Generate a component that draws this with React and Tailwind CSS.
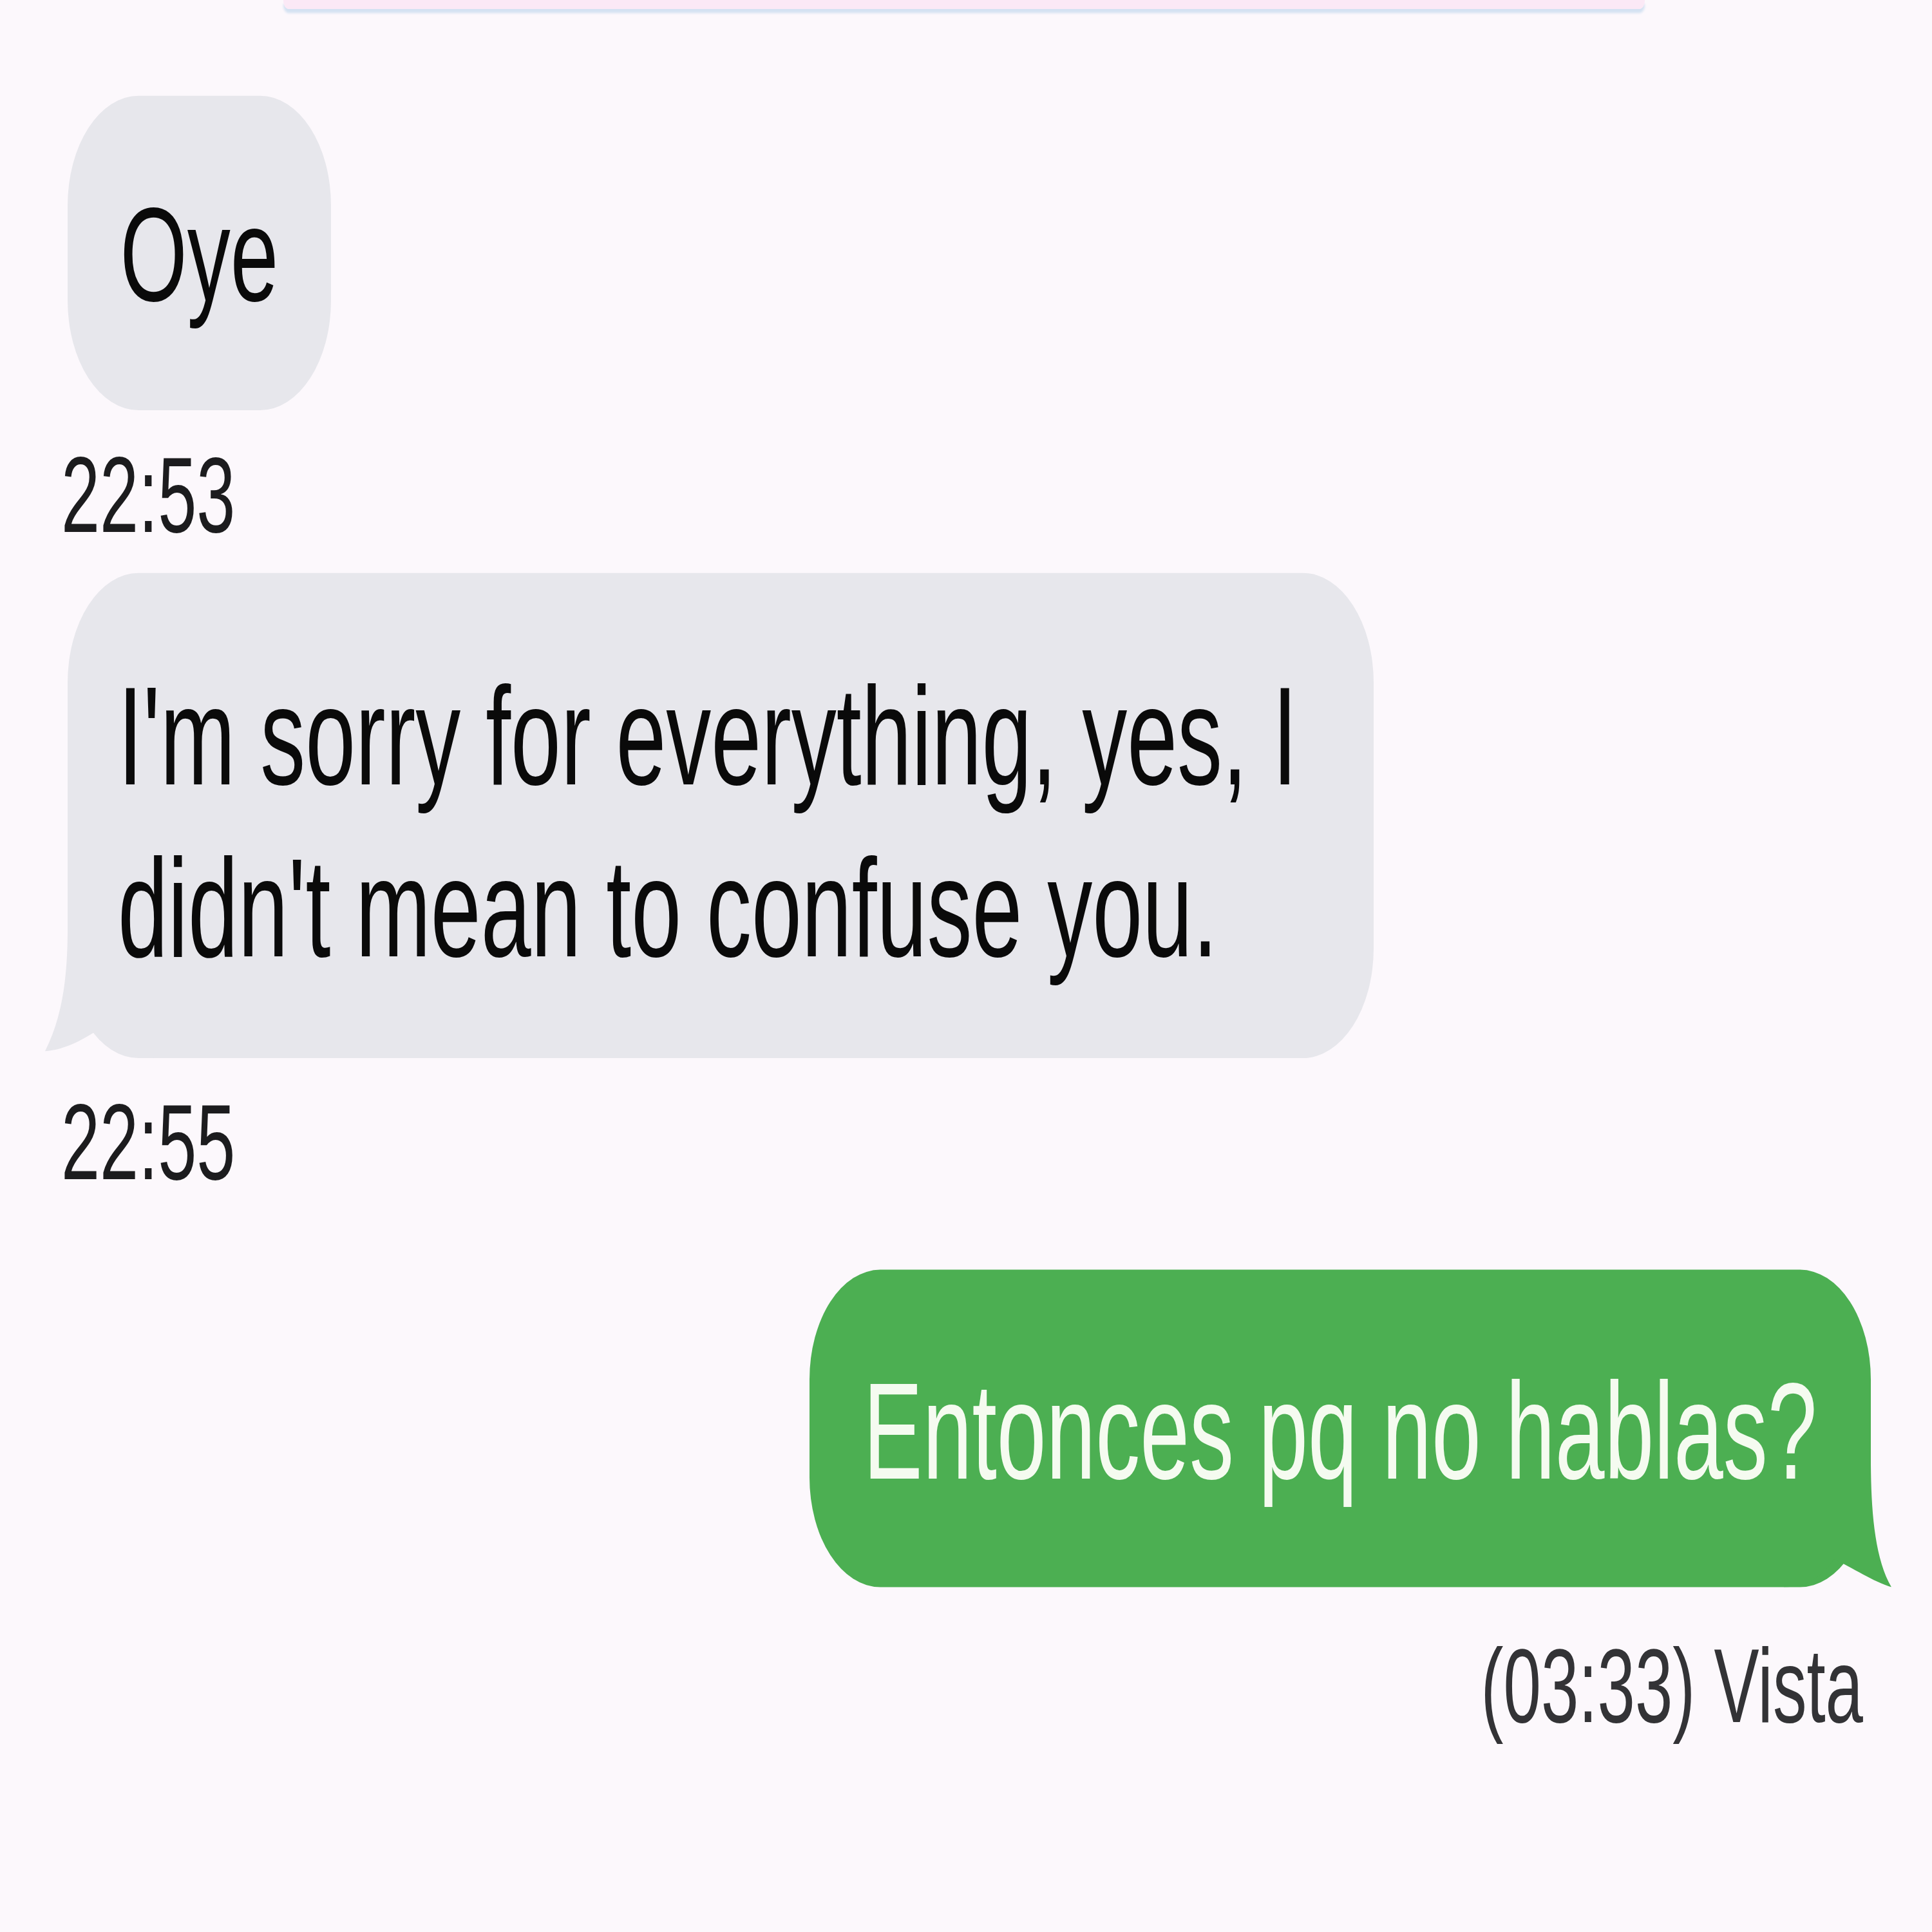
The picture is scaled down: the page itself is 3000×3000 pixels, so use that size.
const GrayTail = () => (
  <svg className="absolute -left-[40px] bottom-0 w-[175px] h-[130px]" viewBox="0 0 175 130">
    <path d="M40 0 C40 40 35 85 5 123 C35 122 70 110 92 99 C110 115 130 130 175 130 L175 0 Z" fill="#e7e7ec" />
  </svg>
)

const GreenTail = () => (
  <svg className="absolute -right-[40px] bottom-0 w-[175px] h-[130px]" viewBox="0 0 175 130">
    <path d="M135 0 C135 50 140 100 167 130 C140 125 105 110 78 102 C60 118 40 130 0 130 L0 0 Z" fill="#4caf52" />
  </svg>
)

export default function App() {
  return (
    <div className="w-[3000px] h-[3000px] overflow-hidden bg-[#fcf8fc] font-['Liberation_Sans',Arial,sans-serif]">
      {/* the screenshot is stretched vertically, so lay out at natural size and stretch */}
      <div className="h-[1935px] origin-top scale-y-[1.55] flex flex-col items-start">
        <div className="ml-[440px] w-[2114px] h-[9px] rounded-b-[8px] bg-[#fbe9f6] shadow-[0_4px_3px_#d4e2f2]" />

        <div className="mt-[87px] ml-[105px] w-[409px] pt-[79px] pb-[76px] rounded-[110px] bg-[#e7e7ec] text-center text-[134px] leading-[160px] text-[#0a0a0a]">
          Oye
        </div>

        <div className="mt-[25px] ml-[95px] text-[108px] leading-[120px] text-[#1c1c1e]">22:53</div>

        <div className="relative mt-[18px] ml-[105px] w-[2028px] pt-[78px] pb-[64px] pl-[78px] rounded-[110px] bg-[#e7e7ec] text-[140px] leading-[172px] text-[#0a0a0a]">
          <GrayTail />
          <p className="relative">
            I'm sorry for everything, yes, I
            <br />
            didn't mean to confuse you.
          </p>
        </div>

        <div className="mt-[24px] ml-[95px] text-[108px] leading-[120px] text-[#1c1c1e]">22:55</div>

        <div className="relative self-end mt-[68px] mr-[95px] w-[1648px] pt-[81px] pb-[77px] rounded-[110px] bg-[#4caf52] text-center text-[138px] leading-[160px] text-[#f5fbf0]">
          <GreenTail />
          <p className="relative">Entonces pq no hablas?</p>
        </div>

        <div className="self-end mt-[39px] mr-[107px] text-[105px] leading-[120px] text-[#333336]">(03:33) Vista</div>
      </div>
    </div>
  )
}
